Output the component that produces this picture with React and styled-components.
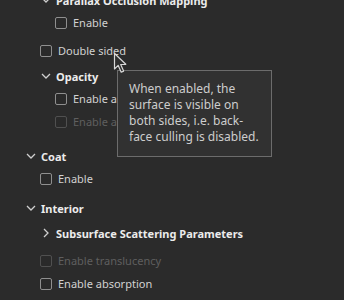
import React from 'react';
import styled, { createGlobalStyle } from 'styled-components';

const GlobalStyle = createGlobalStyle`
    html, body {
        margin: 0;
        padding: 0;
        background: #2b2b2b;
        overflow: hidden;
    }
`;

const Screen = styled.div`
    position: relative;
    width: 344px;
    height: 300px;
    overflow: hidden;
    background: #2b2b2b;
    font-family: "Noto Sans", "Open Sans", sans-serif;
    font-size: 11px;
    color: #d2d2d2;
`;

const Tree = styled.div`
    display: flex;
    flex-direction: column;
    margin-top: -17px;
`;

const Group = styled.div`
    display: flex;
    flex-direction: column;
    padding-top: 3px;
    padding-bottom: ${props => props.$top ? 4 : 5}px;
`;

const Header = styled.div`
    display: flex;
    align-items: center;
    height: 22px;
    padding-left: ${props => 23 + props.$level * 15}px;
    white-space: nowrap;
`;

const ChevronBox = styled.span`
    width: 15px;
    height: 22px;
    display: flex;
    align-items: center;
    justify-content: center;
    color: #cfcfcf;
`;

const HeaderLabel = styled.span`
    margin-left: 3px;
    font-weight: 700;
    color: #ececec;
`;

const Row = styled.div`
    display: flex;
    align-items: center;
    height: 23px;
    padding-left: ${props => 40 + props.$level * 15}px;
    white-space: nowrap;
    color: ${props => props.$disabled ? '#5f5f5f' : '#d2d2d2'};
`;

const Box = styled.span`
    box-sizing: border-box;
    width: 12px;
    height: 12px;
    border-radius: 2px;
    border: 1.5px solid ${props => props.$disabled ? '#505050' : '#8f8f8f'};
    background: #2a2a2a;
    margin-right: 6px;
`;

const Tooltip = styled.div`
    position: absolute;
    left: 117px;
    top: 70px;
    box-sizing: border-box;
    width: 155px;
    height: 87px;
    padding: 10px 11px;
    background: #313131;
    border: 1px solid #6c6c6c;
    font-size: 12px;
    line-height: 16px;
    color: #cdcdcd;
    white-space: nowrap;
    z-index: 2;
`;

const Cursor = styled.svg`
    position: absolute;
    left: 113px;
    top: 52px;
    z-index: 3;
`;

const Chevron = ({ open }) => (
    open ? (
        <svg width="10" height="6" viewBox="0 0 10 6">
            <path d="M1 1 L5 5 L9 1" fill="none" stroke="currentColor" strokeWidth="1.3" />
        </svg>
    ) : (
        <svg width="6" height="10" viewBox="0 0 6 10">
            <path d="M1 1 L5 5 L1 9" fill="none" stroke="currentColor" strokeWidth="1.3" />
        </svg>
    )
);

const SectionHeader = ({ level, open, children }) => (
    <Header $level={level}>
        <ChevronBox><Chevron open={open} /></ChevronBox>
        <HeaderLabel>{children}</HeaderLabel>
    </Header>
);

const Check = ({ level, disabled, children }) => (
    <Row $level={level} $disabled={disabled}>
        <Box $disabled={disabled} />
        <span>{children}</span>
    </Row>
);

export default function App() {
    return (
        <>
            <GlobalStyle />
            <Screen>
                <Tree>
                    <Group $top>
                        <Group>
                            <SectionHeader level={1} open>Parallax Occlusion Mapping</SectionHeader>
                            <Check level={1}>Enable</Check>
                        </Group>
                        <Check level={0}>Double sided</Check>
                        <Group>
                            <SectionHeader level={1} open>Opacity</SectionHeader>
                            <Check level={1}>Enable alpha blending</Check>
                            <Check level={1} disabled>Enable alpha cutoff</Check>
                        </Group>
                    </Group>
                    <Group $top>
                        <SectionHeader level={0} open>Coat</SectionHeader>
                        <Check level={0}>Enable</Check>
                    </Group>
                    <Group $top>
                        <SectionHeader level={0} open>Interior</SectionHeader>
                        <Group>
                            <SectionHeader level={1}>Subsurface Scattering Parameters</SectionHeader>
                        </Group>
                        <Check level={0} disabled>Enable translucency</Check>
                        <Check level={0}>Enable absorption</Check>
                    </Group>
                </Tree>
                <Tooltip>
                    When enabled, the<br />
                    surface is visible on<br />
                    both sides, i.e. back-<br />
                    face culling is disabled.
                </Tooltip>
                <Cursor width="16" height="22" viewBox="0 0 16 22">
                    <path d="M1.5 1.5 L1.5 17 L5.2 13.4 L8.2 20.2 L10.6 19.1 L7.7 12.5 L12.8 12.3 Z"
                        fill="#2e2e2e" stroke="#d8d8d8" strokeWidth="1.2" strokeLinejoin="round" />
                </Cursor>
            </Screen>
        </>
    );
}
